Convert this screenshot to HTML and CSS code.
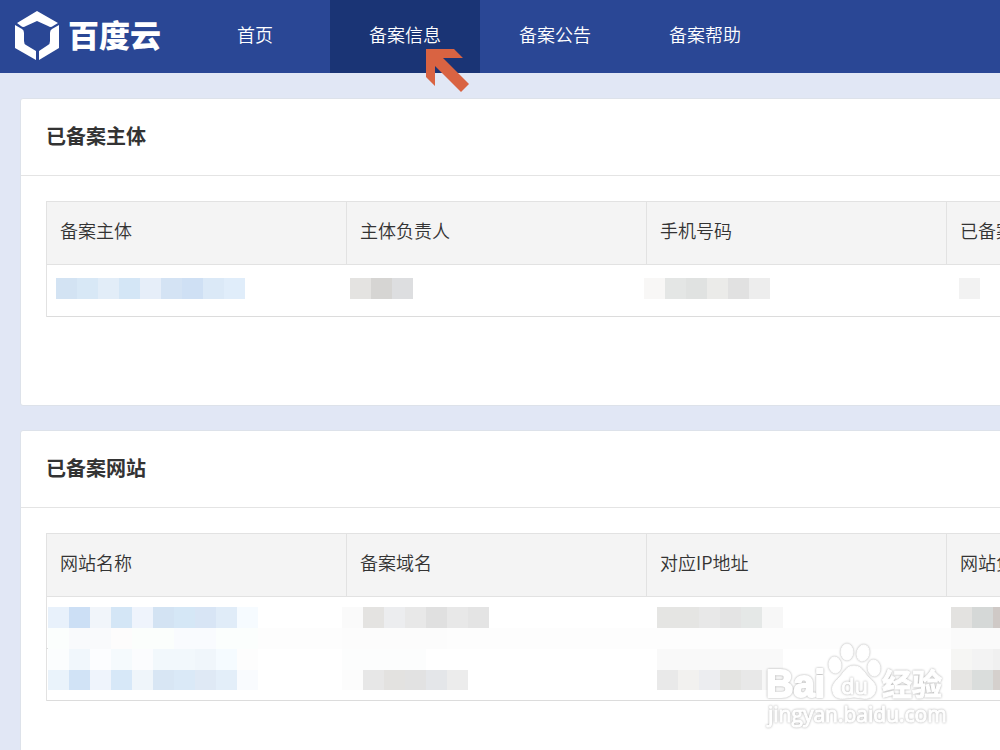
FILE: index.html
```html
<!DOCTYPE html>
<html lang="zh-CN">
<head>
  <meta charset="UTF-8">
  <title>百度云 - 备案信息</title>
  <link rel="stylesheet" href="styles.css">
</head>
<body>
  <header class="topbar">
    <a class="logo" href="#">
      <svg class="logo-mark" viewBox="15 11 44 49" aria-hidden="true">
        <path d="M37 11L58 23L53 26Q51 28 48 26L37 21L26 26Q23 28 21 26L17 23Z"/>
        <path d="M15 25L22 29Q24 30 24 33V41Q24 44 26 45L36 51V60L15 48Z"/>
        <path d="M59 25L52 29Q50 30 50 33V41Q50 44 48 45L39 51V60L59 48Z"/>
      </svg>
      <span class="logo-text">百度云</span>
    </a>
    <nav class="nav">
      <a href="#">首页</a>
      <a href="#" class="active">备案信息
        <svg class="pointer" viewBox="0 0 43 43" aria-hidden="true">
          <path d="M0 0H28L37 9H17L43 35L35 43L9 17V37L0 28Z"/>
        </svg>
      </a>
      <a href="#">备案公告</a>
      <a href="#">备案帮助</a>
    </nav>
  </header>

  <main>
    <section class="card">
      <h2>已备案主体</h2>
      <div class="table-wrap">
        <table>
          <thead>
            <tr><th>备案主体</th><th>主体负责人</th><th>手机号码</th><th>已备案网站</th></tr>
          </thead>
          <tbody>
            <tr><td></td><td></td><td></td><td></td></tr>
          </tbody>
        </table>
        <!-- private data is masked -->
        <svg class="mask" width="954" height="52" shape-rendering="crispEdges" aria-hidden="true">
          <g>
            <rect x="10" y="13" width="21" height="21" fill="#d3e3f3"/>
            <rect x="31" y="13" width="21" height="21" fill="#d8e8f6"/>
            <rect x="52" y="13" width="21" height="21" fill="#e2edf8"/>
            <rect x="73" y="13" width="21" height="21" fill="#d4e6f6"/>
            <rect x="94" y="13" width="21" height="21" fill="#e6eef9"/>
            <rect x="115" y="13" width="21" height="21" fill="#d4e3f4"/>
            <rect x="136" y="13" width="21" height="21" fill="#cfe0f4"/>
            <rect x="157" y="13" width="21" height="21" fill="#dbe9f7"/>
            <rect x="178" y="13" width="21" height="21" fill="#e0edfa"/>
          </g>
          <g>
            <rect x="304" y="13" width="21" height="21" fill="#e4e3e1"/>
            <rect x="325" y="13" width="21" height="21" fill="#d6d5d3"/>
            <rect x="346" y="13" width="21" height="21" fill="#dddee0"/>
          </g>
          <g>
            <rect x="598" y="13" width="21" height="21" fill="#f8f7f6"/>
            <rect x="619" y="13" width="21" height="21" fill="#e4e6e5"/>
            <rect x="640" y="13" width="21" height="21" fill="#e0e2e1"/>
            <rect x="661" y="13" width="21" height="21" fill="#ebebe9"/>
            <rect x="682" y="13" width="21" height="21" fill="#e1e1e1"/>
            <rect x="703" y="13" width="21" height="21" fill="#ededed"/>
          </g>
          <rect x="913" y="13" width="21" height="21" fill="#f2f2f2"/>
        </svg>
      </div>
    </section>

    <section class="card">
      <h2>已备案网站</h2>
      <div class="table-wrap">
        <table>
          <thead>
            <tr><th>网站名称</th><th>备案域名</th><th>对应IP地址</th><th>网站负责人</th></tr>
          </thead>
          <tbody>
            <tr><td></td><td></td><td></td><td></td></tr>
            <tr><td></td><td></td><td></td><td></td></tr>
          </tbody>
        </table>
        <svg class="mask" width="1200" height="100" shape-rendering="crispEdges" aria-hidden="true">
          <rect x="0" y="51" width="2" height="1" fill="#ddd"/>
          <rect x="2" y="31" width="1197" height="21" fill="#fdfdfd"/>
          <g>
            <rect x="2" y="10" width="21" height="21" fill="#e8f1fb"/>
            <rect x="23" y="10" width="21" height="21" fill="#ccdff5"/>
            <rect x="44" y="10" width="21" height="21" fill="#f1f5fa"/>
            <rect x="65" y="10" width="21" height="21" fill="#d4e6f6"/>
            <rect x="86" y="10" width="21" height="21" fill="#eff4fc"/>
            <rect x="107" y="10" width="21" height="21" fill="#d3e3f3"/>
            <rect x="128" y="10" width="21" height="21" fill="#d5e7f6"/>
            <rect x="149" y="10" width="21" height="21" fill="#d8e5f5"/>
            <rect x="170" y="10" width="21" height="21" fill="#e0ecf8"/>
            <rect x="191" y="10" width="21" height="21" fill="#f6fbff"/>
            <rect x="2" y="31" width="21" height="21" fill="#fbfefd"/>
            <rect x="23" y="31" width="42" height="21" fill="#f9fafc"/>
            <rect x="65" y="31" width="21" height="21" fill="#fdfcfc"/>
            <rect x="86" y="31" width="42" height="21" fill="#fbfefc"/>
            <rect x="128" y="31" width="42" height="21" fill="#f9fbfe"/>
            <rect x="170" y="31" width="42" height="21" fill="#fbfefd"/>
            <rect x="2" y="52" width="21" height="21" fill="#fbfdfe"/>
            <rect x="23" y="52" width="21" height="21" fill="#f1f7fc"/>
            <rect x="44" y="52" width="21" height="21" fill="#fcfdff"/>
            <rect x="65" y="52" width="21" height="21" fill="#f5fafd"/>
            <rect x="86" y="52" width="21" height="21" fill="#fbfcfe"/>
            <rect x="107" y="52" width="42" height="21" fill="#f2f8fc"/>
            <rect x="149" y="52" width="21" height="21" fill="#f0f6fb"/>
            <rect x="170" y="52" width="21" height="21" fill="#f5fbff"/>
            <rect x="191" y="52" width="21" height="21" fill="#fdfdfd"/>
            <rect x="2" y="73" width="21" height="20" fill="#eaf3fb"/>
            <rect x="23" y="73" width="21" height="20" fill="#d1e3f6"/>
            <rect x="44" y="73" width="21" height="20" fill="#eff4fc"/>
            <rect x="65" y="73" width="21" height="20" fill="#d7e8f8"/>
            <rect x="86" y="73" width="21" height="20" fill="#eff5fa"/>
            <rect x="107" y="73" width="21" height="20" fill="#d8e6f4"/>
            <rect x="128" y="73" width="21" height="20" fill="#dae9f7"/>
            <rect x="149" y="73" width="21" height="20" fill="#dfe9f5"/>
            <rect x="170" y="73" width="21" height="20" fill="#e3eef9"/>
            <rect x="191" y="73" width="21" height="20" fill="#f9fbfe"/>
          </g>
          <g>
            <rect x="296" y="10" width="21" height="21" fill="#fafafa"/>
            <rect x="317" y="10" width="21" height="21" fill="#e4e3e1"/>
            <rect x="338" y="10" width="21" height="21" fill="#ecedef"/>
            <rect x="359" y="10" width="21" height="21" fill="#e8e8e8"/>
            <rect x="380" y="10" width="21" height="21" fill="#e0e0e0"/>
            <rect x="401" y="10" width="21" height="21" fill="#e8e8e8"/>
            <rect x="422" y="10" width="21" height="21" fill="#e4e4e4"/>
            <rect x="296" y="31" width="105" height="21" fill="#fcfcfc"/>
            <rect x="296" y="52" width="84" height="21" fill="#fcfdfd"/>
            <rect x="296" y="73" width="21" height="20" fill="#fcfcfc"/>
            <rect x="317" y="73" width="21" height="20" fill="#e7e7e7"/>
            <rect x="338" y="73" width="21" height="20" fill="#e3e2e0"/>
            <rect x="359" y="73" width="21" height="20" fill="#e2e2e2"/>
            <rect x="380" y="73" width="21" height="20" fill="#e4e6e9"/>
            <rect x="401" y="73" width="21" height="20" fill="#ececec"/>
          </g>
          <g>
            <rect x="611" y="10" width="42" height="21" fill="#e5e5e3"/>
            <rect x="653" y="10" width="21" height="21" fill="#e8e8e8"/>
            <rect x="674" y="10" width="21" height="21" fill="#e4e4e4"/>
            <rect x="695" y="10" width="21" height="21" fill="#e5e8e7"/>
            <rect x="716" y="10" width="21" height="21" fill="#f7f7f7"/>
            <rect x="611" y="52" width="126" height="21" fill="#f9f9f9"/>
            <rect x="611" y="73" width="21" height="20" fill="#e9e9e9"/>
            <rect x="632" y="73" width="21" height="20" fill="#f2f1ef"/>
            <rect x="653" y="73" width="21" height="20" fill="#ecedf0"/>
            <rect x="674" y="73" width="21" height="20" fill="#e4e4e2"/>
            <rect x="695" y="73" width="21" height="20" fill="#e8e8e8"/>
            <rect x="716" y="73" width="21" height="20" fill="#f7f7f7"/>
          </g>
          <g>
            <rect x="905" y="10" width="21" height="21" fill="#e3e2e0"/>
            <rect x="926" y="10" width="21" height="21" fill="#d5d8d7"/>
            <rect x="947" y="10" width="21" height="21" fill="#cfc9c6"/>
            <rect x="905" y="31" width="63" height="21" fill="#fafafa"/>
            <rect x="905" y="52" width="21" height="21" fill="#f6f6f4"/>
            <rect x="926" y="52" width="21" height="21" fill="#f3f3f3"/>
            <rect x="947" y="52" width="21" height="21" fill="#f0f0f0"/>
            <rect x="905" y="73" width="21" height="20" fill="#e6e5e3"/>
            <rect x="926" y="73" width="21" height="20" fill="#dadddc"/>
            <rect x="947" y="73" width="21" height="20" fill="#d5d0cd"/>
          </g>
        </svg>
      </div>
    </section>
  </main>

  <!-- watermark -->
  <svg class="watermark" width="190" height="94" viewBox="0 0 190 94" role="img" aria-label="Baidu经验">
    <text class="wm-bai" x="6" y="61">Bai</text>
    <g class="wm-paw">
      <ellipse cx="75" cy="29" rx="6" ry="8" transform="rotate(-8 75 29)"/>
      <ellipse cx="87" cy="16" rx="6" ry="8"/>
      <ellipse cx="103" cy="17" rx="6" ry="8" transform="rotate(15 103 17)"/>
      <ellipse cx="114" cy="32" rx="6" ry="8" transform="rotate(-8 114 32)"/>
      <path d="M94 30C102 30 104 37 109 42C114 46 117 50 115 56C113 62 107 63 102 62Q94 60 86 62C80 63 74 62 73 56C71 50 75 46 79 42C84 37 86 30 94 30Z"/>
    </g>
    <text class="wm-du" x="81" y="58">du</text>
    <text class="wm-cn" x="122" y="59">经验</text>
    <text class="wm-url" x="8" y="86">jingyan.baidu.com</text>
  </svg>
</body>
</html>
```

FILE: styles.css
```css
* { box-sizing: border-box; }
html { overflow: hidden; }
body {
  margin: 0;
  background: #e1e7f5;
  color: #333;
  font-family: "Noto Sans CJK SC", sans-serif;
  font-size: 18px;
  font-weight: 350;
}
a { color: #fff; text-decoration: none; }

.topbar { display: flex; height: 73px; background: #2a4795; }
.logo { display: flex; width: 180px; padding-left: 15px; padding-top: 11px; gap: 9px; }
.logo-mark { width: 44px; height: 49px; fill: #fff; }
.logo-text { font-size: 31px; font-weight: 900; line-height: 46px; }

.nav { display: flex; }
.nav a { position: relative; width: 150px; text-align: center; line-height: 68px; }
.nav .active { background: #1a3475; }
.pointer { position: absolute; left: 96px; top: 49px; width: 43px; height: 43px; fill: #d96342; z-index: 1; }

main { padding: 25px 20px; min-width: 1293px; }
.card { background: #fff; border: 1px solid #dde2ea; border-radius: 3px; margin-bottom: 24px; }
.card h2 {
  margin: 0;
  padding: 0 25px 2px;
  border-bottom: 1px solid #e4e4e4;
  font-size: 20px;
  font-weight: bold;
  line-height: 74px;
}
.table-wrap { position: relative; margin: 25px 25px 88px; }

table { width: 1201px; table-layout: fixed; border-collapse: separate; border-spacing: 0; border-left: 1px solid #e2e2e2; }
th {
  height: 64px;
  padding: 0 13px 6px;
  background: #f4f4f4;
  border: 1px solid #e2e2e2;
  border-left: 0;
  font-weight: 350;
  text-align: left;
}
td { height: 52px; padding: 0; }
tbody tr:last-child td { border-bottom: 1px solid #dcdcdc; }
.mask { position: absolute; left: 0; top: 64px; }

.watermark { position: fixed; right: 50px; bottom: 20px; }
.watermark text, .wm-paw {
  fill: #fff;
  stroke: #fff;
  stroke-width: 1px;
  stroke-linejoin: round;
  filter: drop-shadow(0 0 1px #aaa);
}
.watermark .wm-bai { font: bold 38px "Liberation Sans", sans-serif; stroke-width: 2px; }
.watermark .wm-du { font: 22px "Open Sans", sans-serif; }
.watermark .wm-cn { font: bold 30px "Noto Sans CJK SC", sans-serif; }
.watermark .wm-url { font: 21px "Open Sans", sans-serif; }
```
